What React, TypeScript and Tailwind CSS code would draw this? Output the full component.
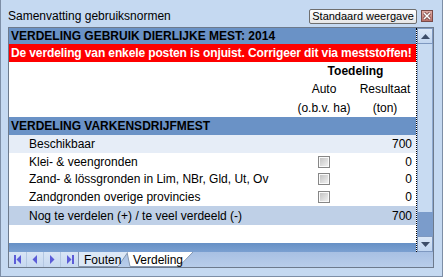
import type { ReactNode } from 'react';

const rows = [
  { label: 'Klei- & veengronden', value: '0' },
  { label: 'Zand- & lössgronden in Lim, NBr, Gld, Ut, Ov', value: '0' },
  { label: 'Zandgronden overige provincies', value: '0' },
];

function Checkbox() {
  return (
    <span className="block h-[12px] w-[12px] border border-[#878787] bg-[#fafafa] p-[1px]">
      <span className="block h-full w-full bg-linear-to-br from-[#c4c4c4] to-[#f0f0f0]" />
    </span>
  );
}

function Row({
  label,
  auto,
  value,
  className,
  h,
}: {
  label: string;
  auto?: ReactNode;
  value: string;
  className: string;
  h: string;
}) {
  return (
    <div className={`flex items-center ${h} ${className}`}>
      <div className="flex-1 pl-[20px] whitespace-nowrap">{label}</div>
      <div className="flex w-[58px] justify-center">{auto}</div>
      <div className="w-[63px] pr-[4px] text-right">{value}</div>
    </div>
  );
}

function Arrow({ dir }: { dir: 'up' | 'down' }) {
  return (
    <svg width="9" height="5" viewBox="0 0 9 5">
      {dir === 'up' ? (
        <polygon points="0,5 9,5 4.5,0" fill="#3d4d68" />
      ) : (
        <polygon points="0,0 9,0 4.5,5" fill="#3d4d68" />
      )}
    </svg>
  );
}

function NavIcon({ kind }: { kind: 'first' | 'prev' | 'next' | 'last' }) {
  const c = '#5c5cd8';
  return (
    <svg width="8" height="9" viewBox="0 0 8 9">
      {kind === 'first' && (
        <>
          <rect x="0" y="0" width="2" height="9" fill={c} />
          <polygon points="7,0 7,9 2.5,4.5" fill={c} />
        </>
      )}
      {kind === 'prev' && <polygon points="6,0 6,9 1.5,4.5" fill={c} />}
      {kind === 'next' && <polygon points="2,0 2,9 6.5,4.5" fill={c} />}
      {kind === 'last' && (
        <>
          <polygon points="1,0 1,9 5.5,4.5" fill={c} />
          <rect x="6" y="0" width="2" height="9" fill={c} />
        </>
      )}
    </svg>
  );
}

function Tab({
  label,
  active,
  width,
  vw,
  points,
  line,
}: {
  label: string;
  active?: boolean;
  width: string;
  vw: number;
  points: string;
  line: string;
}) {
  return (
    <div className={`relative flex h-full items-center ${width}`}>
      <svg className="absolute inset-0 h-full w-full" preserveAspectRatio="none" viewBox={`0 0 ${vw} 15`}>
        <polygon points={points} fill={active ? '#ffffff' : '#dde8f6'} />
        <polyline points={line} fill="none" stroke="#8597b0" strokeWidth="1" />
      </svg>
      <span className="relative pl-[6px] leading-none">{label}</span>
    </div>
  );
}

export default function App() {
  return (
    <div className="h-[277px] w-[443px] overflow-hidden border-r border-b border-l border-[#7d8ea6] bg-[#c5d9f1] font-['Liberation_Sans',Arial,sans-serif] text-[12px] text-black">
      {/* title bar */}
      <div className="flex h-[27px] items-center pt-[5px] pl-[7px] pr-[9px]">
        <span className="flex-1 whitespace-nowrap">Samenvatting gebruiksnormen</span>
        <button
          type="button"
          className="flex h-[15px] w-[108px] items-center justify-center rounded-[2px] border border-[#6f6f6f] bg-linear-to-b from-[#ffffff] to-[#e6e6e6] text-[11px] leading-none whitespace-nowrap"
        >
          Standaard weergave
        </button>
        <span className="ml-[4px] flex h-[12px] w-[12px] items-center justify-center border border-[#7a4a48] bg-linear-to-b from-[#dfaaa3] to-[#b87068]">
          <svg width="8" height="8" viewBox="0 0 8 8">
            <path d="M1 1 L7 7 M7 1 L1 7" stroke="#6e4040" strokeWidth="3" />
            <path d="M1 1 L7 7 M7 1 L1 7" stroke="#ffffff" strokeWidth="1.5" />
          </svg>
        </span>
      </div>

      {/* panel */}
      <div className="ml-[7px] mr-[8px] flex h-[241px] flex-col border border-[#6d7a8c] bg-white">
        <div className="flex h-[224px]">
          {/* content */}
          <div className="flex w-[408px] flex-col border-r border-dotted border-black">
            <div className="flex h-[16px] items-center bg-[#6a92c6] pl-[2px] font-bold whitespace-nowrap">
              VERDELING GEBRUIK DIERLIJKE MEST: 2014
            </div>
            <div className="flex h-[18px] items-center overflow-hidden bg-[#ff0000] pl-[2px] font-bold tracking-[-0.12px] whitespace-nowrap text-white">
              De verdeling van enkele posten is onjuist. Corrigeer dit via meststoffen!
            </div>
            <div className="flex h-[55px] justify-end">
              <div className="flex w-[121px] flex-col">
                <div className="flex h-[18px] items-center justify-center font-bold">Toedeling</div>
                <div className="flex h-[18px] items-center">
                  <span className="w-[58px] text-center">Auto</span>
                  <span className="w-[63px] pl-[5px] pr-[4px] text-center">Resultaat</span>
                </div>
                <div className="flex h-[19px] items-center">
                  <span className="w-[58px] text-center whitespace-nowrap">(o.b.v. ha)</span>
                  <span className="w-[63px] pl-[5px] pr-[4px] text-center">(ton)</span>
                </div>
              </div>
            </div>
            <div className="flex h-[18px] items-center bg-[#6a92c6] pl-[2px] font-bold">
              VERDELING VARKENSDRIJFMEST
            </div>
            <Row label="Beschikbaar" value="700" className="bg-[#e6edf7]" h="h-[18px]" />
            <Row label={rows[0].label} value={rows[0].value} auto={<Checkbox />} className="" h="h-[17px]" />
            <Row label={rows[1].label} value={rows[1].value} auto={<Checkbox />} className="" h="h-[18px]" />
            <Row label={rows[2].label} value={rows[2].value} auto={<Checkbox />} className="" h="h-[18px]" />
            <Row
              label="Nog te verdelen (+) / te veel verdeeld (-)"
              value="700"
              className="bg-[#bfd0e7]"
              h="h-[19px]"
            />
            <div className="h-[18px]" />
            <div className="h-[9px] bg-linear-to-b from-[#6690c5] to-[#7ba0d1]" />
          </div>

          {/* scrollbar */}
          <div className="flex w-[16px] flex-col bg-[#c6d9f1]">
            <div className="flex h-[16px] items-center justify-center border border-[#7e98c0] bg-linear-to-b from-[#dbe7f6] to-[#c2d6f0]">
              <Arrow dir="up" />
            </div>
            <div className="h-[168px] border-x border-[#8ea9d0] bg-[#c8dbf2]" />
            <div className="h-[24px] bg-[#7b9ccb]" />
            <div className="flex h-[16px] items-center justify-center border border-[#7e98c0] bg-linear-to-b from-[#dbe7f6] to-[#c2d6f0]">
              <Arrow dir="down" />
            </div>
          </div>
        </div>

        {/* sheet tabs */}
        <div className="flex h-[15px] bg-linear-to-b from-[#a8c0e3] to-[#b8cdea]">
          <div className="flex w-[69px] bg-linear-to-b from-[#d9e5f5] to-[#c6d8f0]">
            <span className="flex w-[18px] items-center justify-center border-r border-[#b4c7e2]">
              <NavIcon kind="first" />
            </span>
            <span className="flex w-[17px] items-center justify-center border-r border-[#b4c7e2]">
              <NavIcon kind="prev" />
            </span>
            <span className="flex w-[17px] items-center justify-center border-r border-[#b4c7e2]">
              <NavIcon kind="next" />
            </span>
            <span className="flex w-[17px] items-center justify-center">
              <NavIcon kind="last" />
            </span>
          </div>
          <Tab label="Fouten" width="w-[50px]" vw={50} points="0.5,0 50,0 40,15 0.5,15" line="0.5,0 0.5,14.5 40,14.5 50,0" />
          <div className="-ml-[1px]">
            <Tab label="Verdeling" active width="w-[66px]" vw={66} points="0,0 66,0 52,15 3,15" line="0,0 3,14.5 52,14.5 66,0" />
          </div>
        </div>
      </div>
    </div>
  );
}
